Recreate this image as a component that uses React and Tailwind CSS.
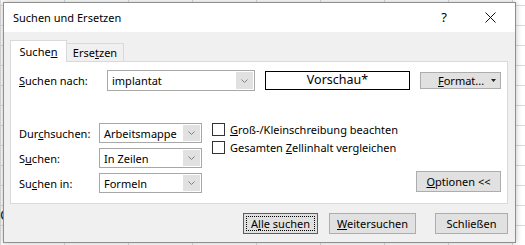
import React from "react";

const font = { fontFamily: '"Noto Sans", "Open Sans", sans-serif' };

function Chevron() {
  return (
    <svg width="9" height="6" viewBox="0 0 9 6" className="block">
      <path d="M1.5 1.5 L4.5 4.5 L7.5 1.5" fill="none" stroke="#808080" strokeWidth="1" />
    </svg>
  );
}

function Select({ value, w = "w-[103px]", h = "h-[20px]" }) {
  return (
    <div className={`${w} ${h} flex border border-[#a8a8a8] bg-white`}>
      <div className="flex-1 flex items-center pl-[4px] text-[11px] text-black leading-none whitespace-nowrap overflow-hidden">{value}</div>
      <div className="w-[17px] m-px bg-[#e1e1e1] flex items-center justify-center">
        <Chevron />
      </div>
    </div>
  );
}

function Checkbox({ children }) {
  return (
    <div className="flex items-center h-[13px] gap-[5px]">
      <div className="w-[13px] h-[13px] border border-[#333] bg-white shrink-0" />
      <span className="text-[11px] leading-none text-black whitespace-nowrap">{children}</span>
    </div>
  );
}

function Btn({ children, w, extra = "" }) {
  return (
    <div
      className={`${w} h-[21px] border border-[#adadad] bg-[#e1e1e1] flex items-center justify-center text-[11px] leading-none text-black ${extra}`}
    >
      {children}
    </div>
  );
}

export default function App() {
  return (
    <div
      className="relative w-[525px] h-[245px] overflow-hidden bg-white bg-[linear-gradient(#dadada_1px,transparent_1px),linear-gradient(90deg,#dadada_1px,transparent_1px)] bg-[size:64px_20px] bg-[position:0_5px]"
      style={font}
    >
      <div className="absolute left-0 top-[208px] text-[14px] leading-none text-[#222]">C</div>
      <div className="absolute left-[3px] top-[2px] w-[513px] h-[241px] border border-[#8f8f8f] bg-[#f0f0f0] flex flex-col shadow-[0_0_6px_rgba(0,0,0,0.25)]">
        {/* title bar */}
        <div className="h-[29px] bg-white flex items-center shrink-0">
          <span className="ml-[9px] text-[11px] text-black leading-none">Suchen und Ersetzen</span>
          <span className="ml-auto mr-[38px] text-[13px] leading-none text-black">?</span>
          <svg width="11" height="11" viewBox="0 0 11 11" className="mr-[19px]">
            <path d="M0.5 0.5 L10.5 10.5 M10.5 0.5 L0.5 10.5" stroke="#111" strokeWidth="1" />
          </svg>
        </div>
        {/* body */}
        <div className="flex-1 flex flex-col pl-[6px] pt-[8px]">
          {/* tabs */}
          <div className="flex items-end h-[21px] relative z-10">
            <div className="w-[57px] h-[22px] bg-white border border-b-0 border-[#d9d9d9] flex items-center justify-center text-[11px] leading-none text-black -mb-px">
              <span>
                Suche<span className="underline">n</span>
              </span>
            </div>
            <div className="w-[57px] h-[18px] border border-l-0 border-b-0 border-[#d9d9d9] flex items-center justify-center text-[11px] leading-none text-black">
              <span>
                Erse<span className="underline">t</span>zen
              </span>
            </div>
          </div>
          {/* panel */}
          <div className="w-[498px] h-[143px] bg-white border border-[#d9d9d9] flex flex-col pl-[8px] pr-[6px] pt-[8px]">
            <div className="flex items-center h-[21px]">
              <span className="w-[88px] text-[11px] leading-none text-black">
                <span className="underline">S</span>uchen nach:
              </span>
              <Select value="implantat" w="w-[148px]" h="h-[21px]" />
              <div className="ml-[10px] w-[145px] h-[19px] border border-black flex items-center justify-center text-[12.5px] leading-none text-black">
                Vorschau*
              </div>
              <div className="ml-[10px] w-[81px] h-[17px] border border-[#adadad] bg-[#e1e1e1] flex items-center text-[11px] leading-none text-black">
                <span className="ml-[17px]">
                  <span className="underline">F</span>ormat...
                </span>
                <svg width="5" height="3" viewBox="0 0 5 3" className="ml-auto mr-[4px]">
                  <path d="M0 0 H5 L2.5 3 Z" fill="#222" />
                </svg>
              </div>
            </div>
            <div className="flex mt-[32px]">
              <div className="flex flex-col gap-[5px]">
                <div className="flex items-center">
                  <span className="w-[80px] text-[11px] leading-none text-black">
                    Dur<span className="underline">c</span>hsuchen:
                  </span>
                  <Select value="Arbeitsmappe" />
                </div>
                <div className="flex items-center">
                  <span className="w-[80px] text-[11px] leading-none text-black">
                    S<span className="underline">u</span>chen:
                  </span>
                  <Select value="In Zeilen" />
                </div>
                <div className="flex items-center">
                  <span className="w-[80px] text-[11px] leading-none text-black">
                    Su<span className="underline">c</span>hen in:
                  </span>
                  <Select value="Formeln" />
                </div>
              </div>
              <div className="ml-[10px] flex flex-col gap-[5px]">
                <Checkbox>
                  <span className="underline">G</span>roß-/Kleinschreibung beachten
                </Checkbox>
                <Checkbox>
                  Gesamten <span className="underline">Z</span>ellinhalt vergleichen
                </Checkbox>
              </div>
              <div className="ml-auto mt-[48px]">
                <Btn w="w-[85px]">
                  <span>
                    <span className="underline">O</span>ptionen &lt;&lt;
                  </span>
                </Btn>
              </div>
            </div>
          </div>
          {/* bottom buttons */}
          <div className="flex mt-[9px] pl-[233px]">
            <div className="w-[75px] h-[21px] border border-[#0078d7] bg-[#e1e1e1] p-[2px]">
              <div className="w-full h-full border border-dotted border-black flex items-center justify-center text-[11px] leading-none text-black">
                <span>
                  A<span className="underline">l</span>le suchen
                </span>
              </div>
            </div>
            <Btn w="w-[87px]" extra="ml-[11px]">
              <span>
                <span className="underline">W</span>eitersuchen
              </span>
            </Btn>
            <Btn w="w-[73px]" extra="ml-[19px]">
              Schließen
            </Btn>
          </div>
        </div>
      </div>
    </div>
  );
}
